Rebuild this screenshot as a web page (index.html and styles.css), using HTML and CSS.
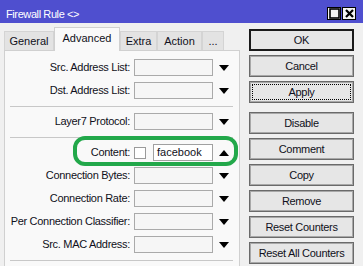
FILE: index.html
```html
<!DOCTYPE html>
<html>
<head>
    <title>Firewall Rule</title>
    <meta name="viewport" content="width=device-width, initial-scale=1" />
    <link rel="stylesheet" href="styles.css">
</head>
<body>
    <div class="window">
        <div class="titlebar">
            <span class="title">Firewall Rule &lt;&gt;</span>
            <div class="winbtns">
                <span class="winbtn"><svg width="11" height="11" viewBox="0 0 11 11"><rect x="1" y="1" width="9" height="9" fill="none" stroke="#000" stroke-width="1.6"/></svg></span>
                <span class="winbtn"><svg width="11" height="11" viewBox="0 0 11 11"><path d="M2 2 L9 9 M9 2 L2 9" stroke="#000" stroke-width="2.2"/></svg></span>
            </div>
        </div>

        <div class="main">
            <div class="leftcol">
                <div class="tabs">
                    <span class="tab tab-general">General</span>
                    <span class="tab tab-sel">Advanced</span>
                    <span class="tab tab-extra">Extra</span>
                    <span class="tab tab-action">Action</span>
                    <span class="tab tab-more">...</span>
                </div>

                <div class="panel">
                    <div class="row">
                        <label class="lbl">Src. Address List:</label>
                        <span class="field"></span>
                        <svg class="arrow" width="10" height="6" viewBox="0 0 10 6"><polygon points="0,0 10,0 5,6" fill="#000"/></svg>
                    </div>
                    <div class="row">
                        <label class="lbl">Dst. Address List:</label>
                        <span class="field"></span>
                        <svg class="arrow" width="10" height="6" viewBox="0 0 10 6"><polygon points="0,0 10,0 5,6" fill="#000"/></svg>
                    </div>
                    <div class="sep"></div>
                    <div class="row">
                        <label class="lbl">Layer7 Protocol:</label>
                        <span class="field"></span>
                        <svg class="arrow" width="10" height="6" viewBox="0 0 10 6"><polygon points="0,0 10,0 5,6" fill="#000"/></svg>
                    </div>
                    <div class="sep"></div>
                    <div class="row">
                        <label class="lbl">Content:</label>
                        <span class="check"></span>
                        <span class="field field-text">facebook</span>
                        <svg class="arrow" width="10" height="6" viewBox="0 0 10 6"><polygon points="0,6 10,6 5,0" fill="#000"/></svg>
                    </div>
                    <div class="row">
                        <label class="lbl">Connection Bytes:</label>
                        <span class="field"></span>
                        <svg class="arrow" width="10" height="6" viewBox="0 0 10 6"><polygon points="0,0 10,0 5,6" fill="#000"/></svg>
                    </div>
                    <div class="row">
                        <label class="lbl">Connection Rate:</label>
                        <span class="field"></span>
                        <svg class="arrow" width="10" height="6" viewBox="0 0 10 6"><polygon points="0,0 10,0 5,6" fill="#000"/></svg>
                    </div>
                    <div class="row">
                        <label class="lbl">Per Connection Classifier:</label>
                        <span class="field"></span>
                        <svg class="arrow" width="10" height="6" viewBox="0 0 10 6"><polygon points="0,0 10,0 5,6" fill="#000"/></svg>
                    </div>
                    <div class="row">
                        <label class="lbl">Src. MAC Address:</label>
                        <span class="field"></span>
                        <svg class="arrow" width="10" height="6" viewBox="0 0 10 6"><polygon points="0,0 10,0 5,6" fill="#000"/></svg>
                    </div>
                    <div class="sep"></div>

                    <!-- highlight drawn over the Content row -->
                    <div class="mark"></div>
                </div>
            </div>

            <div class="rightcol">
                <span class="btn btn-ok">OK</span>
                <span class="btn">Cancel</span>
                <span class="btn btn-apply"><span class="focus">Apply</span></span>
                <span class="btn">Disable</span>
                <span class="btn">Comment</span>
                <span class="btn">Copy</span>
                <span class="btn">Remove</span>
                <span class="btn">Reset Counters</span>
                <span class="btn">Reset All Counters</span>
            </div>
        </div>
    </div>
</body>
</html>
```
FILE: styles.css
```css
body {
    margin: 0;
    font-family: "Liberation Sans", Arial, sans-serif;
    font-size: 11px;
    color: #101020;
}

.window {
    width: 363px;
    height: 266px;
    background-color: #f0f0f0;
    overflow: hidden;
}

.titlebar {
    height: 23px;
    background-color: #4f4fcf;
    display: flex;
    justify-content: space-between;
    box-sizing: border-box;
}

.title {
    color: white;
    padding: 8px 0 0 6px;
    line-height: 13px;
    letter-spacing: -0.4px;
}

.winbtns {
    display: flex;
    gap: 1px;
    padding: 7px 7px 0 0;
}

.winbtn {
    width: 14px;
    height: 13px;
    background-color: #f4f4f4;
    border: 1px solid #000;
    box-sizing: border-box;
    display: flex;
    align-items: center;
    justify-content: center;
}

.main {
    display: flex;
}

.leftcol {
    width: 236px;
    margin-left: 4px;
}

.tabs {
    height: 27px;
    display: flex;
    align-items: flex-end;
}

.tab {
    height: 19px;
    line-height: 19px;
    background-color: #e3e3e3;
    border: 1px solid #d4d4d4;
    border-bottom: none;
    text-align: center;
    margin-bottom: -1px;
    position: relative;
}

.tab-general { width: 48px; }
.tab-extra { width: 35px; }
.tab-action { width: 43px; }
.tab-more { width: 20px; }

.tab-sel {
    width: 64px;
    height: 23px;
    line-height: 20px;
    background-color: #f9f9f9;
    border-color: #d0d0d0;
    z-index: 1;
}

.panel {
    position: relative;
    height: 230px;
    background-color: #f9f9f9;
    border: 1px solid #d0d0d0;
    padding-top: 2px;
}

.row {
    display: flex;
    align-items: center;
    height: 17px;
    margin-top: 6px;
}

.lbl {
    width: 125px;
    text-align: right;
    letter-spacing: -0.3px;
    line-height: 17px;
    white-space: nowrap;
}

.field {
    width: 79px;
    height: 17px;
    margin-left: 4px;
    border: 1px solid #aaaaaa;
    box-sizing: border-box;
    background-color: #f6f6f6;
}

.check {
    width: 12px;
    height: 12px;
    margin-left: 4px;
    border: 1px solid #9a9a9a;
    box-sizing: border-box;
    background-color: white;
}

.field-text {
    width: 60px;
    margin-left: 7px;
    background-color: white;
    border-color: #a0a0a0;
    padding-left: 3px;
    line-height: 15px;
}

.arrow {
    margin-left: 6px;
}

.sep {
    height: 1px;
    margin: 7px 6px 0 5px;
    background-color: #c8c8c8;
}

.mark {
    position: absolute;
    left: 68px;
    top: 85px;
    width: 165px;
    height: 30px;
    border: 4px solid #22a84a;
    border-radius: 12px;
    box-sizing: border-box;
}

.rightcol {
    width: 105px;
    margin-left: 9px;
    padding-top: 6px;
    display: flex;
    flex-direction: column;
}

.btn {
    height: 22px;
    margin-bottom: 4px;
    border: 1px solid #6a6a6a;
    box-shadow: inset 0 0 0 1px #a8a8a8;
    background-color: #e6e6e6;
    box-sizing: border-box;
    display: flex;
    align-items: center;
    justify-content: center;
    letter-spacing: -0.3px;
}

.btn-ok {
    border: 2px solid #1a1a1a;
    box-shadow: none;
}

.btn-apply {
    margin-bottom: 9px;
}

.focus {
    flex: 1;
    align-self: stretch;
    margin: 2px;
    border: 1px dotted #000;
    display: flex;
    align-items: center;
    justify-content: center;
}
```
